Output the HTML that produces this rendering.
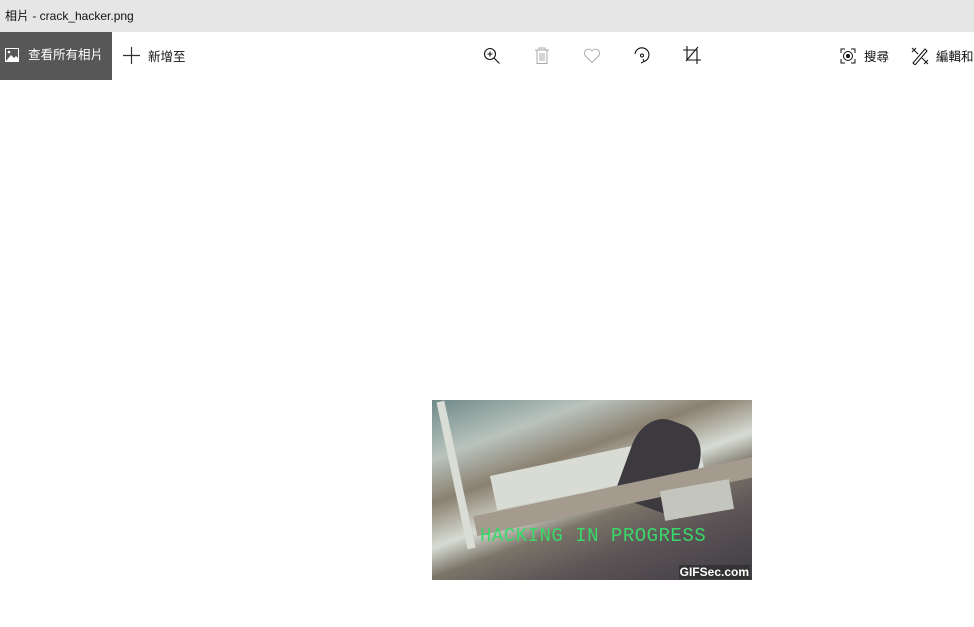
<!DOCTYPE html>
<html><head><meta charset="utf-8"><style>
*{margin:0;padding:0;box-sizing:border-box}
body{width:974px;height:627px;background:#fff;position:relative;overflow:hidden;font-family:"Liberation Sans","Noto Sans CJK TC",sans-serif;color:#111}
.title{position:absolute;left:0;top:0;width:974px;height:32px;background:#e6e6e6;font-size:12px;line-height:32px;padding-left:5px}
.btn{position:absolute;top:32px;left:0;width:112px;height:48px;background:#575757;color:#fff;font-size:12.5px;line-height:46px;padding-left:28px}
.t{position:absolute;font-size:12.5px;top:46px}
svg{position:absolute}
.img{position:absolute;left:432px;top:400px;width:320px;height:180px;overflow:hidden;
background:linear-gradient(160deg,#6f8a88 0%,#b9c3bd 20%,#8a8070 35%,#d7dcd3 50%,#7b7468 60%,#5c5456 75%,#3f3d45 100%)}
</style></head><body>
<div class="title">相片 - crack_hacker.png</div>
<div class="btn">查看所有相片</div>
<svg style="left:5px;top:48px" width="14" height="14" viewBox="0 0 14 14"><rect x="0.5" y="0.5" width="13" height="13" fill="none" stroke="#fff"/><path d="M1 13 L6 7 L9 10 L11 8 L13 10 L13 13Z" fill="#fff"/><circle cx="4" cy="4" r="1.3" fill="#fff"/></svg>
<svg style="left:123px;top:47px" width="17" height="17"><path d="M8.5 0V17M0 8.5H17" stroke="#333" stroke-width="1.2"/></svg>
<div class="t" style="left:148px">新增至</div>
<svg style="left:483px;top:47px" width="18" height="18"><circle cx="7" cy="7" r="5.5" fill="none" stroke="#111" stroke-width="1.1"/><path d="M11 11L16.5 16.5M4.5 7H9.5M7 4.5V9.5" stroke="#111" stroke-width="1.1"/></svg>
<svg style="left:534px;top:47px" width="16" height="18"><path d="M1 3H15M5 3V1H11V3M3 3V16.5H13V3M6 6V14M8 6V14M10 6V14" fill="none" stroke="#aaa"/></svg>
<svg style="left:583px;top:48px" width="18" height="16"><path d="M9 14.5L2 7.5A3.6 3.6 0 0 1 9 3A3.6 3.6 0 0 1 16 7.5Z" fill="none" stroke="#aaa"/></svg>
<svg style="left:633px;top:46px" width="18" height="19"><path d="M2 8A7 7 0 1 1 11 15.5" fill="none" stroke="#111" stroke-width="1.1"/><circle cx="9" cy="9.5" r="1.5" fill="none" stroke="#111"/><path d="M10 13L11 15.5L8 17" fill="none" stroke="#111"/></svg>
<svg style="left:683px;top:46px" width="18" height="18"><path d="M4 0V14H18M0 4H14V18M15 1L3 15" fill="none" stroke="#111" stroke-width="1.1"/></svg>
<svg style="left:840px;top:48px" width="16" height="16"><path d="M1 5V1H5M11 1H15V5M15 11V15H11M5 15H1V11" fill="none" stroke="#111"/><circle cx="8" cy="8" r="4.5" fill="none" stroke="#111"/><circle cx="8" cy="8" r="2" fill="#111"/></svg>
<div class="t" style="left:864px">搜尋</div>
<svg style="left:911px;top:47px" width="18" height="18"><path d="M2 16L14 2L16 4L4 18ZM1 1L7 7M5 1L1 5M11 11L17 17M13 17L17 13" fill="none" stroke="#111"/></svg>
<div class="t" style="left:936px;white-space:nowrap">編輯和建立</div>
<div class="img">
<div style="position:absolute;left:20px;top:0;width:8px;height:150px;background:#d9ddd5;transform:rotate(-12deg)"></div>
<div style="position:absolute;left:60px;top:60px;width:150px;height:35px;background:#d8dcd4;transform:rotate(-12deg)"></div>
<div style="position:absolute;left:200px;top:50px;width:70px;height:25px;background:#d9dfd8;transform:rotate(-12deg)"></div>
<div style="position:absolute;left:195px;top:20px;width:70px;height:90px;background:#3c3a3f;border-radius:40% 40% 0 0;transform:rotate(20deg)"></div>
<div style="position:absolute;left:40px;top:85px;width:300px;height:20px;background:#a49a8e;transform:rotate(-12deg)"></div>
<div style="position:absolute;left:230px;top:85px;width:70px;height:30px;background:#c4c6be;transform:rotate(-10deg)"></div>
<div style="position:absolute;left:48px;top:125px;font-family:'Liberation Mono',monospace;font-size:19px;color:#3ad86a;letter-spacing:0.5px">HACKING IN PROGRESS</div>
<div style="position:absolute;right:2px;bottom:1px;font-size:12px;font-weight:bold;color:#fff;background:#333;padding:0 1px">GIFSec.com</div>
</div>
</body></html>
